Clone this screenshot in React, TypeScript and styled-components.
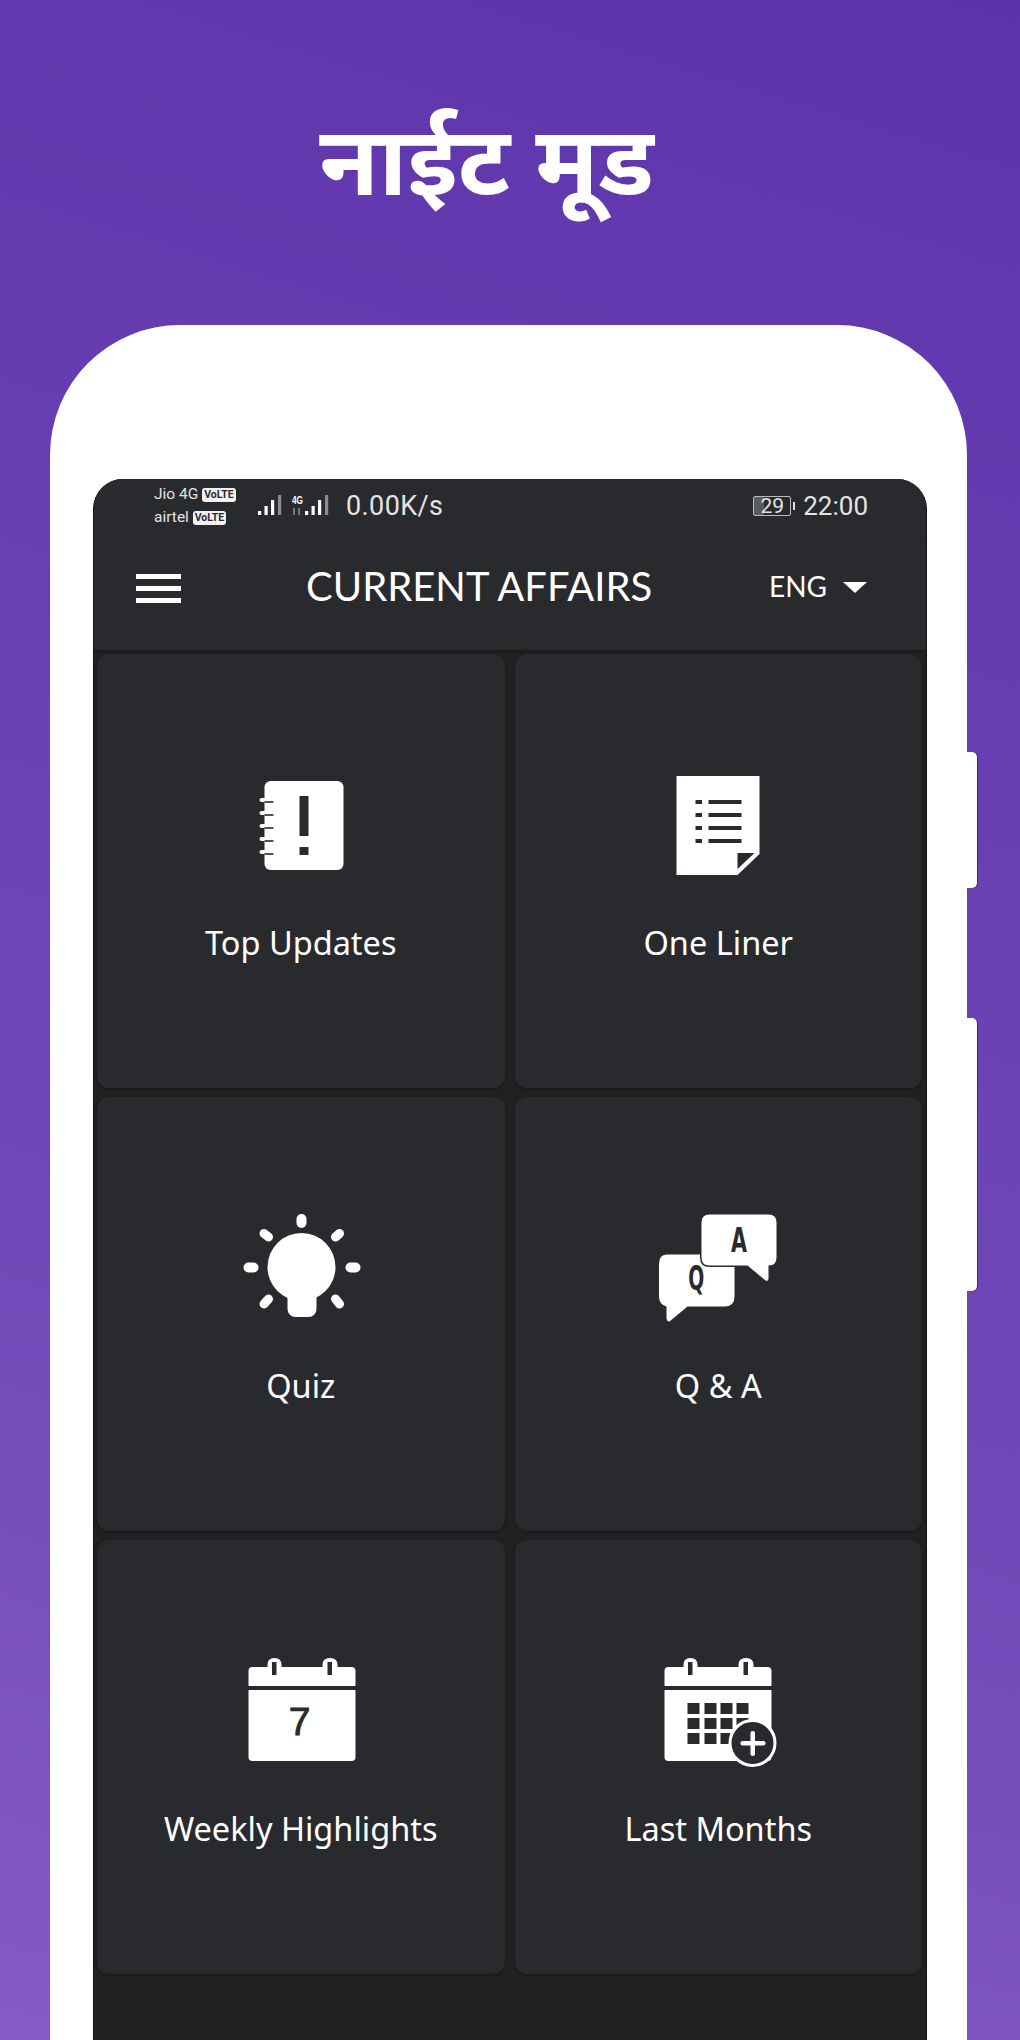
import styled, { createGlobalStyle } from "styled-components";
import type { ReactNode } from "react";

const GlobalStyle = createGlobalStyle`
  html, body {
    margin: 0;
    padding: 0;
    background: #5d35ac;
  }
`;

const BG = "#292a2e";

const TopUpdatesIcon = () => (
  <Icon viewBox="-4.5 0 150 140">
    <rect x="34" y="31" width="79" height="89" rx="6" fill="#fff" />
    <rect x="69" y="46" width="9" height="40" fill={BG} />
    <rect x="69" y="97" width="9" height="8" fill={BG} />
    {[50, 63, 76, 89, 102].map((y) => (
      <g key={y}>
        <line x1="31" y1={y} x2="35" y2={y} stroke="#fff" strokeWidth="4" strokeLinecap="round" />
        <line x1="34" y1={y + 2} x2="43" y2={y + 2} stroke={BG} strokeWidth="1.6" />
      </g>
    ))}
  </Icon>
);

const OneLinerIcon = () => (
  <Icon viewBox="-6.5 0 150 140">
    <polygon points="27,26 110,26 110,104 88,125 27,125" fill="#fff" />
    <polygon points="88,103 105,103 88,119" fill={BG} />
    {[52, 65, 78, 91].map((y) => (
      <g key={y} fill={BG}>
        <rect x="46" y={y - 2} width="6.5" height="4" />
        <rect x="59" y={y - 2} width="33" height="4" />
      </g>
    ))}
  </Icon>
);

const QuizIcon = () => (
  <Icon viewBox="-4.5 -6 150 140">
    <circle cx="71" cy="68" r="34" fill="#fff" />
    <rect x="57" y="88" width="29" height="30" rx="8" fill="#fff" />
    <g stroke="#fff" strokeWidth="10" strokeLinecap="round">
      <line x1="71" y1="20" x2="71" y2="24" />
      <line x1="18" y1="68.5" x2="23" y2="68.5" />
      <line x1="120" y1="68.5" x2="125" y2="68.5" />
    </g>
    <g stroke="#fff" strokeWidth="9" strokeLinecap="round">
      <line x1="33.5" y1="34.5" x2="38" y2="38" />
      <line x1="109" y1="34.5" x2="105" y2="38" />
      <line x1="33.5" y1="105" x2="38" y2="100" />
      <line x1="109" y1="105" x2="105" y2="100" />
    </g>
  </Icon>
);

const QaIcon = () => (
  <Icon viewBox="-6.5 -6.5 150 140">
    <path
      d="M17 55 H75 Q85 55 85 65 V97 Q85 107 75 107 H38 L20 122 Q17 122 17 118 V107 Q9.5 105 9.5 97 V65 Q9.5 55 17 55 Z"
      fill="#fff"
    />
    <path
      d="M60 15 H119 Q127 15 127 23 V58 Q127 66 119 66 V79 Q119 82 116 81 L98 66 H60 Q52 66 52 58 V23 Q52 15 60 15 Z"
      fill="#fff"
      stroke={BG}
      strokeWidth="3"
      paintOrder="stroke"
    />
    <IconLetter x="89.5" y="52.5" fontSize="33" textLength="16" lengthAdjust="spacingAndGlyphs">
      A
    </IconLetter>
    <IconLetter x="46.7" y="90" fontSize="33" textLength="16" lengthAdjust="spacingAndGlyphs">
      Q
    </IconLetter>
  </Icon>
);

const CalendarBase = ({ dx, children }: { dx: number; children: ReactNode }) => (
  <g transform={`translate(${dx} 0)`}>
    <path d="M18 41 V26 Q18 22 22 22 H37 V20 Q37 13 44 13 Q51 13 51 20 V22 H92 V20 Q92 13 99.5 13 Q107 13 107 20 V22 H121 Q125 22 125 26 V41 Z" fill="#fff" />
    <path d="M18 45 H125 V112 Q125 116 121 116 H22 Q18 116 18 112 Z" fill="#fff" />
    <rect x="41.5" y="17" width="4.5" height="13" fill={BG} />
    <rect x="97" y="17" width="4.5" height="13" fill={BG} />
    {children}
  </g>
);

const WeeklyIcon = () => (
  <Icon viewBox="-4.5 -9 150 140">
    <CalendarBase dx={0}>
      <DayNumber x="69" y="89.5" fontSize="39">
        7
      </DayNumber>
    </CalendarBase>
  </Icon>
);

const LastMonthsIcon = () => (
  <Icon viewBox="-6.5 -9 150 140">
    <CalendarBase dx={-3}>
      <g fill={BG}>
        {[58, 73, 88].map((y) =>
          [41, 58, 74, 90].map((x) => <rect key={`${x}-${y}`} x={x} y={y} width="12" height="11" />),
        )}
      </g>
    </CalendarBase>
    <circle cx="103" cy="98" r="22.5" fill={BG} stroke="#fff" strokeWidth="3" />
    <rect x="91" y="96" width="25" height="4.5" rx="2" fill="#fff" />
    <rect x="101" y="86" width="4.5" height="25" rx="2" fill="#fff" />
  </Icon>
);

const Signal = ({ x }: { x: number }) => (
  <g>
    {[
      { dx: 0, y: 17, c: "#fff" },
      { dx: 6.5, y: 12, c: "#fff" },
      { dx: 13, y: 6, c: "#fff" },
      { dx: 20, y: 1, c: "#8b8c8f" },
    ].map(({ dx, y, c }) => (
      <rect key={dx} x={x + dx} y={y} width="3.2" height={21 - y} fill={c} />
    ))}
  </g>
);

const tiles = [
  { label: "Top Updates", icon: <TopUpdatesIcon /> },
  { label: "One Liner", icon: <OneLinerIcon /> },
  { label: "Quiz", icon: <QuizIcon /> },
  { label: "Q & A", icon: <QaIcon /> },
  { label: "Weekly Highlights", icon: <WeeklyIcon /> },
  { label: "Last Months", icon: <LastMonthsIcon /> },
];

const App = () => {
  return (
    <Page>
      <GlobalStyle />
      <Heading>नाईट मूड</Heading>
      <Phone>
        <SideKey $top={427} $height={136} />
        <SideKey $top={693} $height={273} />
        <Screen>
          <StatusBar>
            <Carriers>
              <Carrier>
                Jio 4G <Volte>VoLTE</Volte>
              </Carrier>
              <Carrier>
                airtel <Volte>VoLTE</Volte>
              </Carrier>
            </Carriers>
            <SignalIcon width="74" height="24" viewBox="0 0 74 24">
              <Signal x={0} />
              <text x="34" y="10" fontSize="10" fontWeight="700" fill="#fff" fontFamily="'Liberation Sans', sans-serif" textLength="11" lengthAdjust="spacingAndGlyphs">
                4G
              </text>
              <path d="M36 14 V21 M41 14 V21" stroke="#77787b" strokeWidth="2" />
              <Signal x={47} />
            </SignalIcon>
            <Speed>0.00K/s</Speed>
            <Battery>
              <BatteryBody>29</BatteryBody>
              <BatteryTip />
            </Battery>
            <Clock>22:00</Clock>
          </StatusBar>
          <Header>
            <Burger>
              <span />
              <span />
              <span />
            </Burger>
            <Title>CURRENT AFFAIRS</Title>
            <Language>
              ENG
              <Caret />
            </Language>
          </Header>
          <Grid>
            {tiles.map((tile) => (
              <Tile key={tile.label}>
                {tile.icon}
                <TileLabel>{tile.label}</TileLabel>
              </Tile>
            ))}
          </Grid>
        </Screen>
      </Phone>
    </Page>
  );
};

export default App;

const Page = styled.div`
  width: 1020px;
  height: 2040px;
  overflow: hidden;
  background: linear-gradient(197deg, #5c34aa 0%, #653cb0 25%, #7049b8 65%, #845ac5 100%);
`;

const Heading = styled.h1`
  margin: 0;
  height: 325px;
  padding: 122px 47px 0 0;
  box-sizing: border-box;
  text-align: center;
  font-family: "Noto Sans Devanagari", "Lohit Devanagari", "Noto Sans", sans-serif;
  font-size: 97px;
  line-height: 100px;
  font-weight: 700;
  color: #fff;
`;

const Phone = styled.div`
  position: relative;
  width: 917px;
  height: 1800px;
  margin-left: 50px;
  padding: 154px 40px 0 43px;
  box-sizing: border-box;
  background: #fff;
  border-radius: 130px 130px 0 0;
`;

const SideKey = styled.div<{ $top: number; $height: number }>`
  position: absolute;
  top: ${(p) => p.$top}px;
  right: -10px;
  width: 10px;
  height: ${(p) => p.$height}px;
  background: #fff;
  border-radius: 0 5px 5px 0;
  box-shadow: 1px 0 0 #4a1f9c;
`;

const Screen = styled.div`
  height: 1600px;
  background: #212121;
  border-radius: 30px 30px 0 0;
  border: solid #111;
  border-width: 0 1px;
  overflow: hidden;
`;

const StatusBar = styled.div`
  height: 58px;
  box-sizing: border-box;
  padding: 0 58px 5px 60px;
  display: flex;
  align-items: center;
  background: ${BG};
  color: #e4e4e5;
  font-family: "Roboto", "Liberation Sans", sans-serif;
`;

const Carriers = styled.div`
  width: 104px;
  display: flex;
  flex-direction: column;
  gap: 4px;
`;

const Carrier = styled.div`
  font-size: 15.5px;
  line-height: 19px;
  white-space: nowrap;
`;

const Volte = styled.span`
  display: inline-block;
  padding: 0 2px;
  background: #f2f2f2;
  border-radius: 3px;
  color: ${BG};
  font-size: 10.5px;
  line-height: 14px;
  font-weight: 700;
  vertical-align: 1px;
`;

const SignalIcon = styled.svg`
  flex: none;
`;

const Speed = styled.div`
  margin-left: 14px;
  font-size: 27px;
  letter-spacing: 0.4px;
`;

const Battery = styled.div`
  margin-left: auto;
  display: flex;
  align-items: center;
  gap: 2px;
`;

const BatteryBody = styled.div`
  width: 38px;
  height: 20px;
  box-sizing: border-box;
  border: 1px solid #bbb;
  border-radius: 2px;
  background: linear-gradient(90deg, #5a5b5f 29%, ${BG} 29%);
  font-size: 21px;
  line-height: 18px;
  text-align: center;
`;

const BatteryTip = styled.div`
  width: 2px;
  height: 8px;
  background: #ddd;
`;

const Clock = styled.div`
  margin-left: 8px;
  font-size: 26px;
`;

const Header = styled.div`
  height: 113px;
  box-sizing: border-box;
  padding: 0 59px 16px 42px;
  display: flex;
  align-items: center;
  background: ${BG};
  box-shadow: 0 1px 3px rgba(0, 0, 0, 0.3);
  color: #fff;
`;

const Burger = styled.div`
  width: 45px;
  margin-top: 5px;
  display: flex;
  flex-direction: column;
  gap: 7px;

  span {
    display: block;
    height: 5px;
    background: #fff;
  }
`;

const Title = styled.div`
  margin-left: 125px;
  font-family: "Lato", "Liberation Sans", sans-serif;
  font-size: 40px;
  line-height: 44px;
  white-space: nowrap;
`;

const Language = styled.div`
  margin-left: auto;
  display: flex;
  align-items: center;
  font-family: "Lato", "Liberation Sans", sans-serif;
  font-size: 28px;
`;

const Caret = styled.div`
  margin-left: 16px;
  margin-top: 4px;
  border-style: solid;
  border-width: 11px 12px 0;
  border-color: #fff transparent transparent;
`;

const Grid = styled.div`
  padding: 4px 4px 0 3px;
  display: grid;
  grid-template-columns: 1fr 1fr;
  grid-auto-rows: 434px;
  column-gap: 10px;
  row-gap: 9px;
`;

const Tile = styled.div`
  padding-top: 96px;
  box-sizing: border-box;
  display: flex;
  flex-direction: column;
  align-items: center;
  background: ${BG};
  border-radius: 12px;
  box-shadow: 0 1px 3px rgba(0, 0, 0, 0.35);
`;

const Icon = styled.svg`
  display: block;
  flex: none;
  width: 150px;
  height: 140px;
`;

const IconLetter = styled.text`
  font-family: "DejaVu Sans", "Liberation Sans", sans-serif;
  font-weight: 700;
  text-anchor: middle;
  fill: ${BG};
`;

const DayNumber = styled.text`
  font-family: "Liberation Sans", sans-serif;
  font-weight: 400;
  text-anchor: middle;
  fill: ${BG};
  stroke: ${BG};
  stroke-width: 0.9px;
`;

const TileLabel = styled.div`
  margin-top: 33px;
  font-family: "Noto Sans", "Open Sans", sans-serif;
  font-size: 32.5px;
  line-height: 40px;
  color: #fff;
`;
